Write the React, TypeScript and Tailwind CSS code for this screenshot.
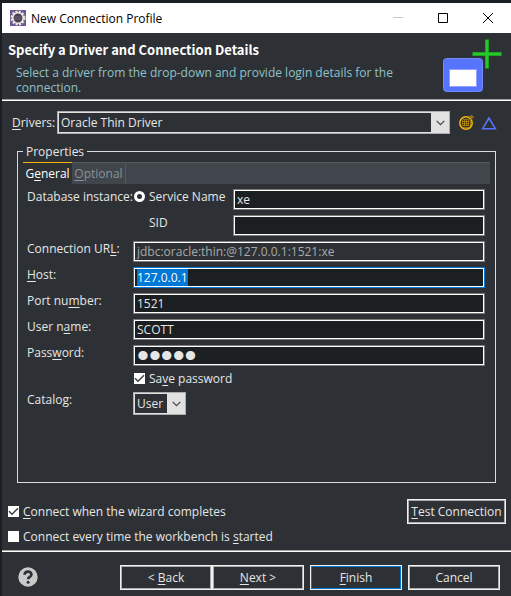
import { useEffect, useRef, type ReactNode } from "react";

function Check({ id, defaultChecked, children }: { id: string; defaultChecked?: boolean; children: ReactNode }) {
  return (
    <div className="flex items-center gap-1">
      <span className="relative flex size-[11px] shrink-0">
        <input
          id={id}
          type="checkbox"
          defaultChecked={defaultChecked}
          className="peer size-[11px] appearance-none bg-white outline-none"
        />
        <svg
          viewBox="0 0 11 11"
          className="pointer-events-none absolute inset-0 hidden size-[11px] peer-checked:block"
          fill="none"
          stroke="#3c3c3c"
          strokeWidth="1.4"
        >
          <path d="M1 5.2 4 8.2 10 2.2" />
        </svg>
      </span>
      <label htmlFor={id} className="whitespace-nowrap">
        {children}
      </label>
    </div>
  );
}

function Drop({ id, value, className }: { id: string; value: string; className: string }) {
  return (
    <div className={`relative ${className}`}>
      <select
        id={id}
        defaultValue={value}
        className="block h-[23px] w-full appearance-none border border-[#adadad] bg-[#2d3135] pl-[3px] pr-4 outline-none ring-1 ring-inset ring-[#e1e1e1]"
      >
        <option>{value}</option>
      </select>
      <span className="pointer-events-none absolute inset-y-px right-px flex w-[18px] items-center justify-center bg-[#e1e1e1]">
        <svg viewBox="0 0 9 6" className="h-[6px] w-[9px]" fill="none" stroke="#444" strokeWidth="1.2">
          <path d="M.7.8 4.5 4.6 8.3.8" />
        </svg>
      </span>
    </div>
  );
}

const field =
  "h-[21px] w-full min-w-0 border border-[#7a7a7a] bg-[#1b1f22] pl-[3px] outline-none ring-1 ring-inset ring-white";

const wizardButton =
  "h-[25px] w-[92px] border border-[#f0f0f0] bg-[#2d3135] ring-1 ring-inset ring-[#adadad] outline-none";

export default function App() {
  const host = useRef<HTMLInputElement>(null);
  useEffect(() => {
    host.current?.focus();
    host.current?.select();
  }, []);

  return (
    <div className="flex min-h-screen flex-col border-l-2 border-t-3 border-[#1c1f21] bg-[#2d3135] font-['Open_Sans','Noto_Sans',sans-serif] text-[12px] leading-[15px] text-[#e6e6e6] [&_u]:underline-offset-2">
      <header className="flex h-[30px] items-center bg-white text-black">
        <svg viewBox="0 0 16 16" className="ml-2 size-4">
          <rect width="16" height="16" fill="#6d5794" />
          <circle cx="8" cy="8" r="6.2" fill="none" stroke="#e8e4dc" strokeWidth="2.6" strokeDasharray="2 1.25" />
          <circle cx="8" cy="8" r="5.2" fill="#47404f" stroke="#eeeae4" strokeWidth="1.5" />
          <path d="M4.2 7h7.6M4.2 9h7.6" stroke="#777080" strokeWidth=".8" />
        </svg>
        <h1 className="ml-[5px] grow">New Connection Profile</h1>
        <button aria-label="Minimize" className="flex h-full w-[45px] items-center justify-center">
          <svg viewBox="0 0 10 10" className="size-[10px]" stroke="#c8c8c8"><path d="M0 4.5h10" /></svg>
        </button>
        <button aria-label="Maximize" className="flex h-full w-[45px] items-center justify-center">
          <svg viewBox="0 0 10 10" className="size-[10px]" stroke="#000" fill="none"><path d="M.5.5h9v9h-9z" /></svg>
        </button>
        <button aria-label="Close" className="flex h-full w-[46px] items-center justify-center">
          <svg viewBox="0 0 10 10" className="size-[10px]" stroke="#000"><path d="M0 0 10 10M10 0 0 10" /></svg>
        </button>
      </header>

      <section className="flex h-[68px] items-start justify-between border-b border-white pl-1.5 shadow-[inset_0_-1px_0_#a0a0a0]">
        <div className="pt-[9px]">
          <h2 className="font-['Noto_Sans_CJK_KR','Noto_Sans',sans-serif] text-[13px] font-bold text-white">
            Specify a Driver and Connection Details
          </h2>
          <p className="mt-2 max-w-[400px] pl-2 text-[#8fc1c9]">
            Select a driver from the drop-down and provide login details for the connection.
          </p>
        </div>
        <svg viewBox="0 0 60 54" className="mr-[9px] mt-[6px] h-[54px] w-[60px] shrink-0">
          <rect x="1.5" y="19.5" width="39" height="33" rx="3" fill="#5674ff" stroke="#7389f5" />
          <rect x="7.5" y="30.5" width="27" height="17" fill="#fff" stroke="#8fa3ff" />
          <path d="M30 15h30M45 0v30" stroke="#1c7a22" strokeWidth="4" />
          <path d="M31 15h28M45 1v28" stroke="#25c92c" strokeWidth="3" />
        </svg>
      </section>

      <main className="flex grow flex-col">
        <div className="flex items-center pl-[10px] pr-[14px] pt-[10px]">
          <label htmlFor="drivers" className="w-[45px]"><u>D</u>rivers:</label>
          <Drop id="drivers" value="Oracle Thin Driver" className="grow" />
          <button aria-label="New driver definition" className="ml-2">
            <svg viewBox="0 0 16 16" className="size-4" fill="none" stroke="#f0b400">
              <circle cx="8" cy="8" r="6.2" strokeWidth="1.5" />
              <path d="M6 4v9M8 4v9M10 4v9M4 6h9M4 8h9M4 10h9" strokeDasharray="1 1" />
              <path d="M11 2h5M13.5 0v5" stroke="#8f7420" strokeWidth="1.6" />
            </svg>
          </button>
          <button aria-label="Edit driver definition" className="ml-[7px]">
            <svg viewBox="0 0 16 16" className="size-4" fill="none" stroke="#5674ff" strokeWidth="1.6">
              <path d="M8 3 1.7 13.7h12.6z" />
            </svg>
          </button>
        </div>

        <fieldset className="mx-[15px] mt-[10px] flex min-w-0 grow flex-col border border-[#dcdcdc] px-[5px] pb-2">
          <legend className="px-[3px]">Properties</legend>
          <div role="tablist" className="mt-[3px] flex h-[22px] bg-[#40464b] shadow-[inset_0_1px_0_#53595d]">
            <button role="tab" aria-selected="true" className="w-[49px] border-t border-[#f5b800] bg-[#2d3135] text-white">
              G<u>e</u>neral
            </button>
            <button role="tab" aria-selected="false" className="w-[54px] border-r border-t border-[#53595d] text-[#8b9196]">
              <u>O</u>ptional
            </button>
          </div>

          <div className="mt-[5px] grid grid-cols-[106px_95px_5px_1fr] gap-y-[5px] pl-[4px] pr-[5px]">
            <span className="whitespace-nowrap">Database instance:</span>
            <div className="flex items-start gap-1">
              <input
                id="service"
                type="radio"
                name="instance"
                className="ml-px mt-[2px] size-[11px] shrink-0 appearance-none rounded-full border-[3px] border-white bg-[#2d3135]"
              />
              <label htmlFor="service" className="whitespace-nowrap">Service Name</label>
            </div>
            <input aria-label="Service Name" defaultValue="xe" className={`${field} col-start-4`} />

            <label htmlFor="sid" className="col-start-2 pl-[16px]">SID</label>
            <input id="sid" className={`${field} col-start-4`} />

            <label htmlFor="url">Connection UR<u>L</u>:</label>
            <div className="col-span-3">
              <input
                id="url"
                readOnly
                defaultValue="jdbc:oracle:thin:@127.0.0.1:1521:xe"
                className="block h-[21px] w-full border border-[#7a7a7a] bg-[#2d3135] pl-[3px] text-[#aaaaaa] outline-none ring-1 ring-inset ring-white"
              />
            </div>

            <label htmlFor="host"><u>H</u>ost:</label>
            <input
              id="host"
              ref={host}
              defaultValue="127.0.0.1"
              className="col-span-3 h-[21px] w-full border border-[#0078d7] bg-[#1b1f22] pl-[3px] outline-none ring-1 ring-inset ring-white selection:bg-[#0078d7] selection:text-white"
            />

            <label htmlFor="port">Port nu<u>m</u>ber:</label>
            <input id="port" defaultValue="1521" className={`${field} col-span-3`} />

            <label htmlFor="user">User n<u>a</u>me:</label>
            <input id="user" defaultValue="SCOTT" className={`${field} col-span-3`} />

            <label htmlFor="password">Pass<u>w</u>ord:</label>
            <input
              id="password"
              type="password"
              defaultValue="tiger"
              className={`${field} col-span-3 font-['Liberation_Sans',sans-serif] text-[34px]`}
            />

            <div className="col-span-3 col-start-2 h-4 pl-px">
              <Check id="save" defaultChecked>Sa<u>v</u>e password</Check>
            </div>

            <label htmlFor="catalog">Catalo<u>g</u>:</label>
            <Drop id="catalog" value="User" className="w-[53px]" />
          </div>
        </fieldset>

        <div className="mt-4 flex items-center justify-between pl-1.5 pr-[5px]">
          <Check id="complete" defaultChecked><u>C</u>onnect when the wizard completes</Check>
          <button className="h-[25px] w-[99px] whitespace-nowrap border border-[#f0f0f0] ring-1 ring-inset ring-[#adadad]">
            <u>T</u>est Connection
          </button>
        </div>
        <div className="mb-[6px] mt-[5px] pl-1.5">
          <Check id="everytime">Connect every time the workbench is <u>s</u>tarted</Check>
        </div>
      </main>

      <footer className="flex h-[46px] items-center border-t border-[#a0a0a0] pl-4 pr-[11px] shadow-[inset_0_1px_0_#fff]">
        <button aria-label="Help" className="flex pt-1.5">
          <svg viewBox="0 0 20 20" className="size-5">
            <circle cx="10" cy="10" r="9.7" fill="#c9c9c9" />
            <path d="M6.6 7.8c0-4.2 6.9-4.1 6.9-.3 0 2.4-3.4 2.4-3.4 4.7" fill="none" stroke="#2d3135" strokeWidth="2.6" />
            <circle cx="10.1" cy="15.2" r="1.5" fill="#2d3135" />
          </svg>
        </button>
        <div className="ml-auto flex pt-[7px]">
          <button className={wizardButton}>&lt; <u>B</u>ack</button>
          <button className={wizardButton}><u>N</u>ext &gt;</button>
          <button className="ml-1.5 h-[25px] w-[92px] border border-[#f0f0f0] bg-[#2d3135] ring-1 ring-inset ring-[#0078d7]">
            <u>F</u>inish
          </button>
          <button className={`${wizardButton} ml-1.5`}>Cancel</button>
        </div>
      </footer>
    </div>
  );
}
